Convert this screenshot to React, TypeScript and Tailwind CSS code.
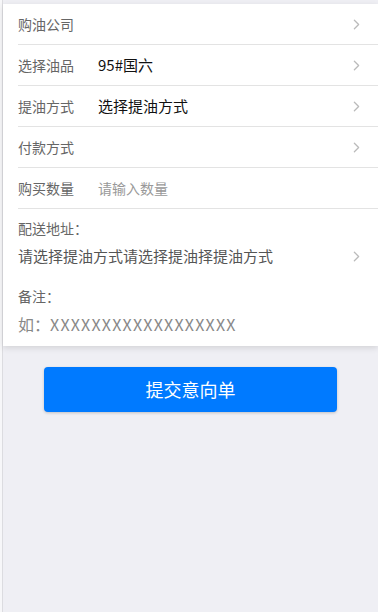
import { ChevronRight } from "lucide-react";

const rows = [
  { label: "购油公司", value: "", arrow: true },
  { label: "选择油品", value: "95#国六", arrow: true },
  { label: "提油方式", value: "选择提油方式", arrow: true },
  { label: "付款方式", value: "", arrow: true },
  { label: "购买数量", value: "请输入数量", placeholder: true, arrow: false },
];

export default function App() {
  return (
    <div
      className="min-h-[612px] bg-[#f7f7f9] pl-[2px]"
      style={{ fontFamily: '"Noto Sans CJK SC", "Noto Sans", sans-serif' }}
    >
      <div className="min-h-[612px] border-l border-[#dcdce0] bg-[#efeff4] pt-[4px]">
        {/* form card */}
        <section className="bg-white shadow-[0_2px_6px_rgba(0,0,0,0.12)]">
          {rows.map((r) => (
            <div key={r.label} className="pl-[15px]">
              <div className="flex h-[41px] items-center border-b border-[#e3e3e3]">
                <span className="w-[80px] text-[14px] text-[#666]">{r.label}</span>
                <span
                  className={
                    r.placeholder
                      ? "flex-1 text-[14px] text-[#999]"
                      : "flex-1 text-[15px] text-[#111]"
                  }
                >
                  {r.value}
                </span>
                {r.arrow && (
                  <ChevronRight className="mr-[13px] h-[17px] w-[17px] text-[#bbb]" strokeWidth={1.8} />
                )}
              </div>
            </div>
          ))}

          <div className="pl-[15px] pt-[7px] pb-[10px]">
            <div className="text-[14px] leading-[24px] text-[#666]">配送地址：</div>
            <div className="mt-[4px] flex items-center">
              <span className="flex-1 text-[15px] leading-[24px] text-[#555]">
                请选择提油方式请选择提油择提油方式
              </span>
              <ChevronRight className="mr-[13px] h-[17px] w-[17px] text-[#bbb]" strokeWidth={1.8} />
            </div>
            <div className="mt-[16px] text-[14px] leading-[24px] text-[#666]">备注：</div>
            <div className="mt-[4px] text-[16px] leading-[24px] text-[#888]">
              如：<span className="tracking-[1.2px]">XXXXXXXXXXXXXXXXXX</span>
            </div>
          </div>
        </section>

        <div className="flex justify-center pt-[21px]">
          <button className="h-[45px] w-[293px] rounded-[4px] bg-[#007aff] text-[18px] text-white shadow-[0_1px_3px_rgba(0,0,0,0.2)]">
            提交意向单
          </button>
        </div>
      </div>
    </div>
  );
}
